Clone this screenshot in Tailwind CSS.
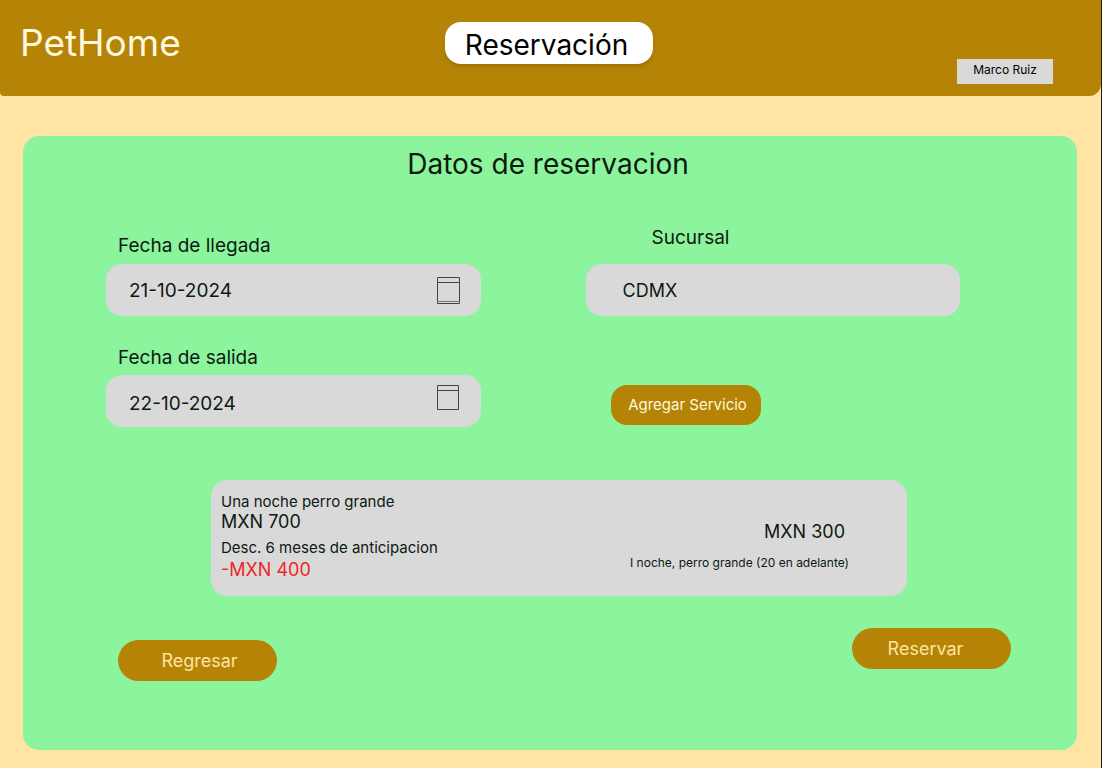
<!DOCTYPE html>
<html lang="es">
<head>
<meta charset="utf-8">
<meta name="viewport" content="width=device-width, initial-scale=1">
<title>PetHome - Reservación</title>
<script src="https://cdn.jsdelivr.net/npm/@tailwindcss/browser@4"></script>
</head>
<body class="flex min-h-screen flex-col border-r border-[#1c1a14] bg-[#ffe4a3] font-['Inter',sans-serif] text-[#0c1a10]">
  <header class="grid h-24 grid-cols-[1fr_auto_1fr] rounded-br-xl rounded-bl bg-[#b58407] pr-1">
    <a href="#" class="mt-[19px] ml-5 justify-self-start text-[37px] leading-12 text-[#fff8dc]">PetHome</a>
    <h1 class="mt-[22px] h-[42px] w-[208px] rounded-2xl bg-white pr-1 text-center text-[28px] leading-[46px] text-black shadow-md">Reservación</h1>
    <button type="button" class="mr-11 mb-3 h-[25px] w-24 self-end justify-self-end bg-[#d9d9d9] pb-1 text-xs text-black">Marco Ruiz</button>
  </header>

  <main class="mt-10 mr-6 mb-[18px] ml-[23px] flex-1 rounded-2xl bg-[#8cf49d]">
    <h2 class="pt-2 pr-1 text-center text-[28px] leading-10">Datos de reservacion</h2>

    <form>
      <div class="mt-10 mr-[117px] ml-[83px] grid grid-cols-2 gap-[105px]">
        <div class="flex flex-col pt-2">
          <label for="llegada" class="ml-3 text-[19px] leading-7">Fecha de llegada</label>
          <div class="mt-1 flex h-[52px] items-center rounded-2xl bg-[#d9d9d9] pr-5 pl-[23px]">
            <input id="llegada" type="text" value="21-10-2024" class="min-w-0 flex-1 bg-transparent pt-0.5 text-[19px]">
            <svg class="h-[27px] w-6" viewBox="0 0 24 27" fill="none" stroke="#444" aria-hidden="true"><path d="M.5.5h22v26h-22zM.5 5.500h22"/><path d="M.5 24.500h22" stroke="#777"/></svg>
          </div>
          <label for="salida" class="mt-7 ml-3 text-[19px] leading-7">Fecha de salida</label>
          <div class="mt-[3px] flex h-[52px] items-center rounded-2xl bg-[#d9d9d9] pr-5 pl-[23px]">
            <input id="salida" type="text" value="22-10-2024" class="min-w-0 flex-1 bg-transparent pt-1.5 text-[19px]">
            <svg class="mb-2 h-[27px] w-6" viewBox="0 0 24 27" fill="none" stroke="#444" aria-hidden="true"><path d="M.5 1.500h21v24h-21zM.5 6.500h21"/></svg>
          </div>
        </div>
        <div class="flex flex-col items-start">
          <label for="sucursal" class="ml-[66px] text-[19px] leading-7">Sucursal</label>
          <input id="sucursal" type="text" value="CDMX" class="mt-3 h-[52px] w-full rounded-2xl bg-[#d9d9d9] px-[37px] text-lg">
          <button type="button" class="mt-[69px] ml-[25px] h-10 w-[150px] rounded-2xl bg-[#b58407] pl-1 text-[15px] text-[#fff8dc]">Agregar Servicio</button>
        </div>
      </div>

      <section class="mt-[53px] mr-[170px] ml-[188px] flex h-[116px] justify-between rounded-2xl bg-[#d9d9d9] pl-[10px]">
        <div class="pt-3">
          <p class="text-[15px] leading-5">Una noche perro grande</p>
          <p class="text-lg leading-5">MXN 700</p>
          <p class="mt-1 text-[15px] leading-6">Desc. 6 meses de anticipacion</p>
          <p class="text-lg leading-5 text-[#f02424]">-MXN 400</p>
        </div>
        <div class="pt-10 pr-[58px] text-right">
          <p class="pr-1 text-lg leading-6">MXN 300</p>
          <p class="mt-[7px] text-xs leading-6">I noche, perro grande (20 en adelante)</p>
        </div>
      </section>

      <div class="mt-8 mr-[66px] ml-[95px] flex items-start justify-between">
        <button type="button" class="mt-3 h-[41px] w-[159px] rounded-full bg-[#b58407] pl-1 text-lg text-[#ffe4a3]">Regresar</button>
        <button type="submit" class="h-[41px] w-[159px] rounded-full bg-[#b58407] pr-3 text-lg text-[#ffe4a3]">Reservar</button>
      </div>
    </form>
  </main>
</body>
</html>
